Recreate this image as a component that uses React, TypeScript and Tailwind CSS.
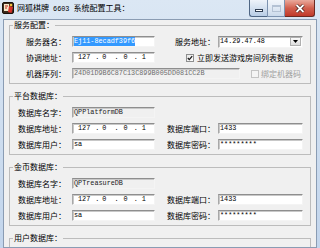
import type { ReactNode } from 'react';

const cjk = "font-['Noto_Sans_CJK_SC','Liberation_Sans',sans-serif]";
const mono = "font-['Liberation_Mono',monospace]";
const sunken =
  'border border-t-[#8e8e8e] border-l-[#a8a8a8] border-r-[#f4f4f4] border-b-[#f4f4f4] shadow-[inset_1px_1px_0_#c8c8c8]';

function Lbl({ w, children, muted }: { w: string; children: ReactNode; muted?: boolean }) {
  return (
    <span className={`${w} shrink-0 text-right text-[8px] leading-[11px] whitespace-nowrap ${muted ? 'text-[#a0a0a0]' : 'text-black'}`}>
      {children}
    </span>
  );
}

function Edit({ className = '', children, disabled }: { className?: string; children?: ReactNode; disabled?: boolean }) {
  return (
    <div
      className={`${className} ${sunken} ${mono} flex h-[11px] shrink-0 items-center overflow-hidden whitespace-nowrap pl-[1px] text-[6.8px] leading-[9px] ${
        disabled ? 'bg-[#f0f0f0] text-[#6d6d6d]' : 'bg-white text-black'
      }`}
    >
      {children}
    </div>
  );
}

function IpEdit() {
  return (
    <Edit className="ml-[6px] w-[83px]">
      <span className="ml-[4px]">127</span>
      <span className="ml-[5px]">.</span>
      <span className="ml-[3px]">0</span>
      <span className="ml-[8px]">.</span>
      <span className="ml-[5px]">0</span>
      <span className="ml-[6px]">.</span>
      <span className="ml-[4px]">1</span>
    </Edit>
  );
}

function Combo({ value }: { value: string }) {
  return (
    <div className={`ml-[3px] flex h-[12px] w-[85px] shrink-0 items-center bg-white ${sunken}`}>
      <span className={`${mono} flex-1 pl-[1px] text-[6.8px] leading-[9px] text-black`}>{value}</span>
      <div className="mr-[1px] flex h-[9px] w-[11px] items-center justify-center border border-[#b0b0b0] bg-gradient-to-b from-[#fafafa] to-[#dcdcdc]">
        <svg width="5" height="3" viewBox="0 0 5 3">
          <path d="M0 0h5L2.5 3z" fill="#000" />
        </svg>
      </div>
    </div>
  );
}

function Check({ checked, disabled }: { checked?: boolean; disabled?: boolean }) {
  return (
    <div
      className={`flex h-[8px] w-[8px] shrink-0 items-center justify-center border ${
        disabled ? 'border-[#c4c4c4] bg-[#f4f4f4]' : 'border-[#8e8f8f] bg-gradient-to-br from-[#e6e6e6] to-white'
      }`}
    >
      {checked && (
        <svg width="6" height="6" viewBox="0 0 6 6">
          <path d="M0.8 3l1.5 1.6L5.2 1.2" fill="none" stroke="#1b1b1b" strokeWidth="1.3" />
        </svg>
      )}
    </div>
  );
}

function Row({ children }: { children: ReactNode }) {
  return <div className="flex h-[11px] items-center">{children}</div>;
}

function Group({ title, children }: { title: string; children?: ReactNode }) {
  return (
    <fieldset className="mx-[5px] shrink-0 border border-[#bcbcbc] pt-[6px] pb-[4px]">
      <legend className="ml-[3px] px-[1px] text-[8px] leading-[10px] text-black">{title}</legend>
      <div className="flex min-h-[43px] flex-col gap-[5px]">{children}</div>
    </fieldset>
  );
}

function DbGroup({ title, name }: { title: string; name: string }) {
  return (
    <Group title={title}>
      <Row>
        <Lbl w="w-[56px]">数据库名字：</Lbl>
        <Edit className="ml-[6px] w-[83px]" disabled>
          <span className="text-[#1a1a1a]">{name}</span>
        </Edit>
      </Row>
      <Row>
        <Lbl w="w-[56px]">数据库地址：</Lbl>
        <IpEdit />
        <Lbl w="w-[60px]">数据库端口：</Lbl>
        <Edit className="ml-[3px] w-[85px]">1433</Edit>
      </Row>
      <Row>
        <Lbl w="w-[56px]">数据库用户：</Lbl>
        <Edit className="ml-[6px] w-[83px]">sa</Edit>
        <Lbl w="w-[60px]">数据库密码：</Lbl>
        <Edit className="ml-[3px] w-[85px]">*********</Edit>
      </Row>
    </Group>
  );
}

function AppIcon() {
  return (
    <svg width="12" height="12" viewBox="0 0 12 12" className="mt-[2px] ml-[2px] shrink-0">
      <rect x="0.5" y="0.5" width="11" height="11" rx="1.5" fill="#3a2a1e" stroke="#1a120c" />
      <rect x="2" y="2" width="5" height="7" fill="#f4e7c8" />
      <path d="M3 3.5h3v1H3zM3 5.5h2v1H3z" fill="#b5251b" />
      <path d="M7 4l4 1-1.5 6L6 10z" fill="#d7322a" />
      <circle cx="9" cy="3" r="1.3" fill="#f2c23b" />
    </svg>
  );
}

function CaptionButtons() {
  return (
    <div className="ml-auto mr-[5px] flex h-[17px] shrink-0">
      <div className="flex w-[18px] items-center justify-center rounded-bl-[3px] border border-r-0 border-t-0 border-[#4f6684] bg-gradient-to-b from-[#eef3fa] via-[#d4e1f0] to-[#b8cde6]">
        <div className="mt-[4px] h-[3px] w-[8px] border border-[#2f3d52] bg-white" />
      </div>
      <div className="flex w-[18px] items-center justify-center border border-t-0 border-[#7d93b0] bg-gradient-to-b from-[#f2f6fb] via-[#e0e9f4] to-[#cbdaeb]">
        <div className="h-[7px] w-[9px] border border-[#b4c2d4] border-t-2" />
      </div>
      <div className="flex w-[30px] items-center justify-center rounded-br-[3px] border border-l-0 border-t-0 border-[#6b2a22] bg-gradient-to-b from-[#e9a99c] via-[#d2604f] to-[#c0392a]">
        <svg width="10" height="9" viewBox="0 0 10 9">
          <path d="M1.5 1l7 7M8.5 1l-7 7" stroke="#3b1510" strokeWidth="3.2" />
          <path d="M1.5 1l7 7M8.5 1l-7 7" stroke="#fff" strokeWidth="1.8" />
        </svg>
      </div>
    </div>
  );
}

export default function App() {
  return (
    <div className={`${cjk} flex h-[248px] w-[320px] flex-col overflow-hidden bg-gradient-to-b from-[#dbe7f4] to-[#c2d5ec]`}>
      {/* title bar */}
      <div className="flex h-[19px] shrink-0 items-start">
        <AppIcon />
        <span className="mt-[3px] ml-[3px] text-[8px] leading-[10px] whitespace-nowrap text-black">
          网狐棋牌<span className={`${mono} text-[6.8px]`}> 6603 </span>系统配置工具：
        </span>
        <CaptionButtons />
      </div>

      {/* client */}
      <div className="mx-[3px] flex min-h-0 flex-1 flex-col gap-[7px] overflow-hidden border border-[#8a9cb3] bg-[#f0f0f0]">
        <Group title="服务配置：">
          <Row>
            <Lbl w="w-[56px]">服务器名：</Lbl>
            <Edit className="ml-[6px] w-[83px]">
              <span className="bg-[#3399ff] text-white">Ej11-8ecadf39f6</span>
            </Edit>
            <Lbl w="w-[60px]">服务地址：</Lbl>
            <Combo value="14.29.47.48" />
          </Row>
          <Row>
            <Lbl w="w-[56px]">协调地址：</Lbl>
            <IpEdit />
            <div className="ml-[31px]">
              <Check checked />
            </div>
            <span className="ml-[3px] text-[8px] leading-[11px] whitespace-nowrap">立即发送游戏房间列表数据</span>
          </Row>
          <Row>
            <Lbl w="w-[56px]">机器序列：</Lbl>
            <Edit className="ml-[6px] w-[168px]" disabled>
              24D01D9B6C87C13C899B005DD081CC2B
            </Edit>
            <div className="ml-[11px]">
              <Check disabled />
            </div>
            <span className="ml-[2px] text-[8px] leading-[11px] whitespace-nowrap text-[#a0a0a0]">绑定机器码</span>
          </Row>
        </Group>

        <DbGroup title="平台数据库：" name="QPPlatformDB" />
        <DbGroup title="金币数据库：" name="QPTreasureDB" />
        <Group title="用户数据库：" />
      </div>
    </div>
  );
}
